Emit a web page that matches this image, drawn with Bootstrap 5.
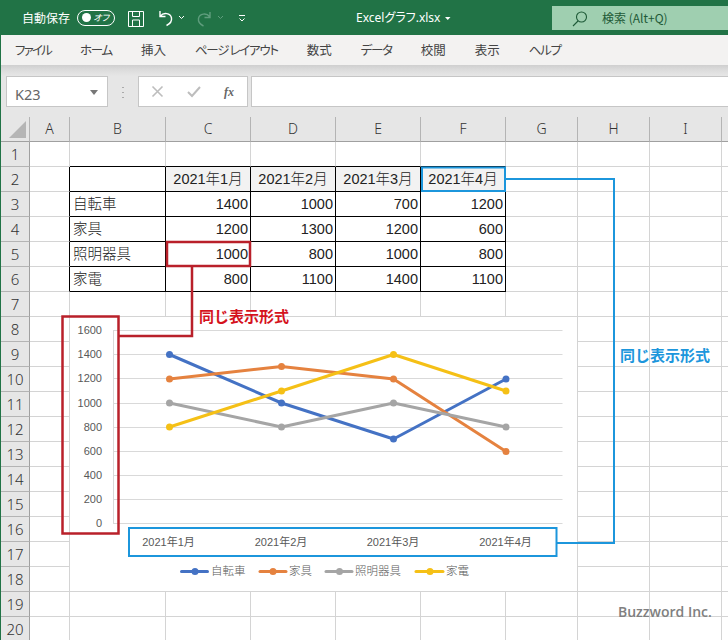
<!DOCTYPE html>
<html lang="ja">
<head>
<meta charset="utf-8">
<title>Excelグラフ.xlsx</title>
<link rel="stylesheet" href="https://cdn.jsdelivr.net/npm/bootstrap@5.3.0/dist/css/bootstrap.min.css">
<style>
html,body{margin:0;height:640px;overflow:hidden;background:#fff}
body{font-family:"Noto Sans CJK JP","Liberation Sans",sans-serif;color:#222}
.xwin{position:relative;width:728px;height:640px;overflow:hidden;border-left:1px solid #217346;box-sizing:border-box}
.xtitle{height:35px;background:#217346;color:#fff;font-size:12px;margin-left:-1px}
.xauto{margin-left:22px;width:48px}
.xtoggle{width:38px;height:16px;margin-left:7px;border:1px solid #fff;border-radius:8px;position:relative;font-size:9px;line-height:14px;text-align:right;padding-right:5px;font-feature-settings:"palt";font-style:italic}
.xtoggle i{position:absolute;left:4px;top:2px;width:9px;height:9px;border-radius:50%;background:#fff}
.xfile{position:absolute;left:356px;top:9px;line-height:18px;font-size:12px;font-family:"Noto Sans","Noto Sans CJK JP",sans-serif;font-feature-settings:"palt"}
.xsearch{position:absolute;left:552px;top:6px;width:176px;height:24px;background:#9fcfb0;color:#1e5a37;font-size:12px;line-height:24px;padding-left:50px}
.xsearch svg{position:absolute;left:19px;top:4px}
.xmenu{height:30px;background:#f3f2f1;color:#444;font-size:12.5px;gap:29px;padding-left:14px;font-feature-settings:"palt"}
.xkana{letter-spacing:-1.300px}
.xkana.xfirst{letter-spacing:-1.800px}
.xformula{height:52px;background:linear-gradient(#cfcfcf 0,#dcdcdc 5px,#e6e6e6 11px,#e6e6e6 100%);position:relative}
.xname,.xfx,.xinput{position:absolute;top:11px;height:31px;background:#fff;border:1px solid #c6c6c6}
.xname{left:5px;width:102px;color:#666;font-size:14.5px;line-height:34px;padding-left:8px;font-family:"Noto Sans",sans-serif}
.xname i{position:absolute;right:9px;top:13px;border:4.5px solid transparent;border-top:5px solid #777;border-bottom:0}
.xdots{position:absolute;left:121px;top:20px;width:2px;height:13px;background:radial-gradient(circle,#aaa 1px,transparent 1px) 0 0/2px 5px}
.xfx{left:137px;width:110px}
.xinput{left:250px;width:480px}
.xsheet{table-layout:fixed;width:793px;border-collapse:separate;border-spacing:0;font-size:14.5px;color:#222;line-height:24px}
.xsheet th,.xsheet td{height:25px;padding:0 2px;border-right:1px solid #d4d4d4;border-bottom:1px solid #d4d4d4;white-space:nowrap;overflow:hidden;font-weight:300;font-family:"Liberation Sans","Noto Sans CJK JP",sans-serif}
.xsheet thead th{height:24px;background:#e6e6e6;border-right-color:#b4b4b4;border-bottom-color:#a0a0a0;text-align:center;font-size:14px;color:#333;font-family:"Noto Sans",sans-serif;line-height:24px}
.xsheet tbody th{background:#e6e6e6;border-right-color:#a0a0a0;border-bottom-color:#b4b4b4;text-align:center;font-size:15px;color:#333;padding:0;font-family:"Noto Sans",sans-serif}
.xsheet .xb{border-right-color:#000;border-bottom-color:#000}
.xsheet .xr{border-right-color:#000}
.xsheet .xu{border-bottom-color:#000}
.xsheet .xn{text-align:right}
.xsheet .xh{background:#f2f2f2;text-align:center}
.xsheet .xl{padding-left:3px}
.xcorner{position:absolute;left:8px;top:4px;width:0;height:0;border-left:17px solid transparent;border-bottom:17px solid #b5b5b5}
.xover{position:absolute;left:-1px;top:0;width:728px;height:640px;pointer-events:none}
.xover text{font-family:"Liberation Sans","Noto Sans CJK JP",sans-serif;font-size:11px;fill:#595959}
.xover .xlg{font-family:"Noto Sans CJK JP",sans-serif;font-size:11.5px;font-weight:300}
.xover .xred{font-family:"Noto Sans CJK JP",sans-serif;font-size:15px;font-weight:700;fill:#d5121d}
.xover .xblue{font-family:"Noto Sans CJK JP",sans-serif;font-size:15px;font-weight:700;fill:#1c96dc}
.xover .xbrand{font-family:"Open Sans",sans-serif;font-size:14px;font-weight:600;fill:#808080}
</style>
</head>
<body>
<div class="xwin">
  <div class="xtitle d-flex align-items-center position-relative">
    <span class="xauto">自動保存</span>
    <span class="xtoggle"><i></i>オフ</span>
    <svg class="position-absolute top-0 start-0" width="460" height="35" fill="none" stroke="#fff">
      <path d="M128.500 11.500h15v15h-15zM132.500 11.500v5h7v-5M132.500 26v-6h7v6" stroke-width="1"/>
      <path d="M160 11v5.500h5.500M160.500 16c3-4 10-3 11 2 .7 4-3 6.500-5 7.500" stroke-width="1.400"/>
      <path d="M179 16l2.500 2.500 2.500-2.500" stroke-width="1"/>
      <path d="M210 12v5.500h-5.500M209.500 16.500c-3-4-10-3-11 2-.7 4 3 6.500 5 7.500" stroke="#5f9d7d" stroke-width="1.400"/>
      <path d="M218 16l2.500 2.500 2.500-2.500" stroke="#5f9d7d" stroke-width="1"/>
      <path d="M239 15.500h6M239.500 18.500l2.500 2.500 2.500-2.500" stroke-width="1"/>
      <path d="M445 17h5.500l-2.750 3z" fill="#fff" stroke="none"/>
    </svg>
    <span class="xfile">Excelグラフ.xlsx</span>
    <div class="xsearch">
      <svg width="18" height="18" fill="none" stroke="#1e5a37" stroke-width="1.100"><circle cx="10.500" cy="7" r="5"/><path d="M7 11l-5 5"/></svg>
      検索 (Alt+Q)
    </div>
  </div>
  <nav class="xmenu d-flex align-items-center">
    <span class="xkana xfirst">ファイル</span><span class="xkana">ホーム</span><span>挿入</span><span class="xkana">ページ レイアウト</span><span>数式</span><span class="xkana">データ</span><span>校閲</span><span>表示</span><span class="xkana">ヘルプ</span>
  </nav>
  <div class="xformula">
    <div class="xname">K23<i></i></div>
    <div class="xdots"></div>
    <div class="xfx">
      <svg width="108" height="29" fill="none" stroke="#bdbdbd" stroke-width="1.600">
        <path d="M13.500 9.500l10 10M23.500 9.500l-10 10"/>
        <path d="M49 15l4 4 8-9" stroke-width="2"/>
        <text x="85" y="19" font-family="Liberation Serif,serif" font-style="italic" font-weight="700" font-size="12" fill="#666" stroke="none">fx</text>
      </svg>
    </div>
    <div class="xinput"></div>
  </div>
  <div class="position-relative">
    <table class="xsheet">
      <colgroup><col style="width:29px"><col style="width:40px"><col style="width:96px"><col style="width:85px"><col style="width:85px"><col style="width:85px"><col style="width:85px"><col style="width:72px"><col style="width:72px"><col style="width:72px"><col style="width:72px"></colgroup>
      <thead><tr><th></th><th>A</th><th>B</th><th>C</th><th>D</th><th>E</th><th>F</th><th>G</th><th>H</th><th>I</th><th></th></tr></thead>
      <tbody>
        <tr><th>1</th><td></td><td class="xu"></td><td class="xu"></td><td class="xu"></td><td class="xu"></td><td class="xu"></td><td></td><td></td><td></td><td></td></tr>
        <tr><th>2</th><td class="xr"></td><td class="xb"></td><td class="xb xh">2021年1月</td><td class="xb xh">2021年2月</td><td class="xb xh">2021年3月</td><td class="xb xh">2021年4月</td><td></td><td></td><td></td><td></td></tr>
        <tr><th>3</th><td class="xr"></td><td class="xb xl">自転車</td><td class="xb xn">1400</td><td class="xb xn">1000</td><td class="xb xn">700</td><td class="xb xn">1200</td><td></td><td></td><td></td><td></td></tr>
        <tr><th>4</th><td class="xr"></td><td class="xb xl">家具</td><td class="xb xn">1200</td><td class="xb xn">1300</td><td class="xb xn">1200</td><td class="xb xn">600</td><td></td><td></td><td></td><td></td></tr>
        <tr><th>5</th><td class="xr"></td><td class="xb xl">照明器具</td><td class="xb xn">1000</td><td class="xb xn">800</td><td class="xb xn">1000</td><td class="xb xn">800</td><td></td><td></td><td></td><td></td></tr>
        <tr><th>6</th><td class="xr"></td><td class="xb xl">家電</td><td class="xb xn">800</td><td class="xb xn">1100</td><td class="xb xn">1400</td><td class="xb xn">1100</td><td></td><td></td><td></td><td></td></tr>
        <tr><th>7</th><td></td><td></td><td></td><td></td><td></td><td></td><td></td><td></td><td></td><td></td></tr>
        <tr><th>8</th><td></td><td></td><td></td><td></td><td></td><td></td><td></td><td></td><td></td><td></td></tr>
        <tr><th>9</th><td></td><td></td><td></td><td></td><td></td><td></td><td></td><td></td><td></td><td></td></tr>
        <tr><th>10</th><td></td><td></td><td></td><td></td><td></td><td></td><td></td><td></td><td></td><td></td></tr>
        <tr><th>11</th><td></td><td></td><td></td><td></td><td></td><td></td><td></td><td></td><td></td><td></td></tr>
        <tr><th>12</th><td></td><td></td><td></td><td></td><td></td><td></td><td></td><td></td><td></td><td></td></tr>
        <tr><th>13</th><td></td><td></td><td></td><td></td><td></td><td></td><td></td><td></td><td></td><td></td></tr>
        <tr><th>14</th><td></td><td></td><td></td><td></td><td></td><td></td><td></td><td></td><td></td><td></td></tr>
        <tr><th>15</th><td></td><td></td><td></td><td></td><td></td><td></td><td></td><td></td><td></td><td></td></tr>
        <tr><th>16</th><td></td><td></td><td></td><td></td><td></td><td></td><td></td><td></td><td></td><td></td></tr>
        <tr><th>17</th><td></td><td></td><td></td><td></td><td></td><td></td><td></td><td></td><td></td><td></td></tr>
        <tr><th>18</th><td></td><td></td><td></td><td></td><td></td><td></td><td></td><td></td><td></td><td></td></tr>
        <tr><th>19</th><td></td><td></td><td></td><td></td><td></td><td></td><td></td><td></td><td></td><td></td></tr>
        <tr><th>20</th><td></td><td></td><td></td><td></td><td></td><td></td><td></td><td></td><td></td><td></td></tr>
      </tbody>
    </table>
    <div class="xcorner"></div>
  </div>
  <svg class="xover" viewBox="0 0 728 640" fill="none">
    <rect x="70" y="317" width="507" height="274" fill="#fff"/>
    <g stroke="#d9d9d9" stroke-width="1">
      <path d="M113.500 330.500h449M113.500 354.500h449M113.500 378.500h449M113.500 403.500h449M113.500 427.500h449M113.500 451.500h449M113.500 475.500h449M113.500 499.500h449M113.500 523.500h449M113.500 330v194"/>
    </g>
    <g stroke-width="3" stroke-linejoin="round">
      <polyline points="169.500,354.500 281.500,403 393.500,439 506,379" stroke="#4472c4"/>
      <polyline points="169.500,379 281.500,366.500 393.500,379 506,451.500" stroke="#e5823f"/>
      <polyline points="169.500,403 281.500,427 393.500,403 506,427" stroke="#a5a5a5"/>
      <polyline points="169.500,427 281.500,391 393.500,354.500 506,391" stroke="#f5c016"/>
    </g>
    <g fill="#4472c4"><circle cx="169.500" cy="354.500" r="3.500"/><circle cx="281.500" cy="403" r="3.500"/><circle cx="393.500" cy="439" r="3.500"/><circle cx="506" cy="379" r="3.500"/></g>
    <g fill="#e5823f"><circle cx="169.500" cy="379" r="3.500"/><circle cx="281.500" cy="366.500" r="3.500"/><circle cx="393.500" cy="379" r="3.500"/><circle cx="506" cy="451.500" r="3.500"/></g>
    <g fill="#a5a5a5"><circle cx="169.500" cy="403" r="3.500"/><circle cx="281.500" cy="427" r="3.500"/><circle cx="393.500" cy="403" r="3.500"/><circle cx="506" cy="427" r="3.500"/></g>
    <g fill="#f5c016"><circle cx="169.500" cy="427" r="3.500"/><circle cx="281.500" cy="391" r="3.500"/><circle cx="393.500" cy="354.500" r="3.500"/><circle cx="506" cy="391" r="3.500"/></g>

    <g text-anchor="end">
      <text x="102" y="334">1600</text><text x="102" y="358">1400</text><text x="102" y="382">1200</text><text x="102" y="407">1000</text><text x="102" y="431">800</text><text x="102" y="455">600</text><text x="102" y="479">400</text><text x="102" y="503">200</text><text x="102" y="527">0</text>
    </g>
    <g text-anchor="middle">
      <text x="168.500" y="546">2021年1月</text><text x="281" y="546">2021年2月</text><text x="393" y="546">2021年3月</text><text x="505.500" y="546">2021年4月</text>
    </g>

    <g stroke-width="3" stroke-linecap="round">
      <path d="M181.500 571.500h26" stroke="#4472c4"/><path d="M260 571.500h26" stroke="#e5823f"/><path d="M326 571.500h26" stroke="#a5a5a5"/><path d="M416 571.500h27" stroke="#f5c016"/>
    </g>
    <circle cx="195" cy="571.500" r="3.500" fill="#4472c4"/><circle cx="273" cy="571.500" r="3.500" fill="#e5823f"/><circle cx="339.500" cy="571.500" r="3.500" fill="#a5a5a5"/><circle cx="430" cy="571.500" r="3.500" fill="#f5c016"/>
    <text class="xlg" x="211" y="575">自転車</text><text class="xlg" x="289" y="575">家具</text><text class="xlg" x="355" y="575">照明器具</text><text class="xlg" x="446" y="575">家電</text>

    <g stroke="#b9202a" stroke-width="2.500">
      <rect x="167" y="242" width="83" height="24"/>
      <rect x="62.500" y="316.500" width="56" height="217"/>
      <path d="M192 266v70h-73"/>
    </g>
    <g stroke="#1c96dc" stroke-width="2">
      <rect x="422" y="167.500" width="83" height="23.500"/>
      <rect x="129" y="528" width="427.500" height="28"/>
      <path d="M557 543h57v-364h-109"/>
    </g>
    <text class="xred" x="199" y="322">同じ表示形式</text>
    <text class="xblue" x="620" y="361">同じ表示形式</text>
    <text class="xbrand" x="618" y="617">Buzzword Inc.</text>
  </svg>
</div>
<script src="https://cdn.jsdelivr.net/npm/bootstrap@5.3.0/dist/js/bootstrap.bundle.min.js"></script>
</body>
</html>
